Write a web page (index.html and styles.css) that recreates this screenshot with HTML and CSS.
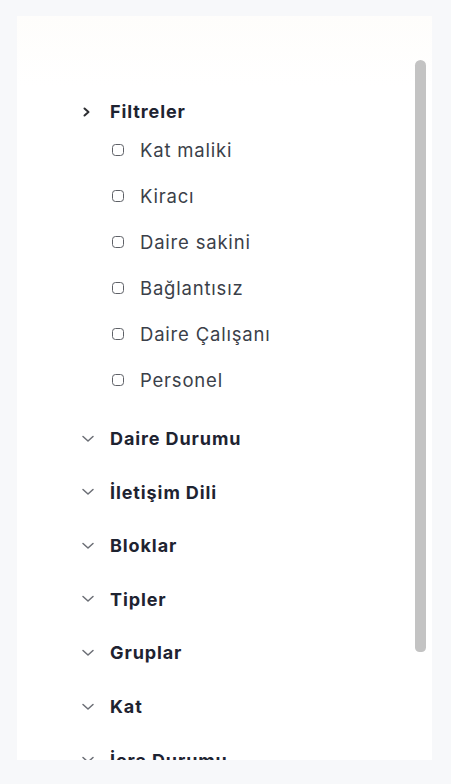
FILE: index.html
```html
<!DOCTYPE html>
<html lang="tr">
<head>
<meta charset="utf-8">
<link rel="stylesheet" href="styles.css">
</head>
<body>
<div class="panel">
  <div class="scroller">
    <div class="list">
      <section class="group open">
        <div class="head">
          <svg class="chev" viewBox="0 0 18 16"><path d="M5.5 4.5 L9.5 8 L5.5 11.5"/></svg>
          <span>Filtreler</span>
        </div>
        <ul class="items">
          <li><span class="box"></span><span>Kat maliki</span></li>
          <li><span class="box"></span><span>Kiracı</span></li>
          <li><span class="box"></span><span>Daire sakini</span></li>
          <li><span class="box"></span><span>Bağlantısız</span></li>
          <li><span class="box"></span><span>Daire Çalışanı</span></li>
          <li><span class="box"></span><span>Personel</span></li>
        </ul>
      </section>
      <section class="group"><div class="head"><svg class="chev down" viewBox="0 0 18 16"><path d="M4 5.5 L9 10 L14 5.5"/></svg><span>Daire Durumu</span></div></section>
      <section class="group"><div class="head"><svg class="chev down" viewBox="0 0 18 16"><path d="M4 5.5 L9 10 L14 5.5"/></svg><span>İletişim Dili</span></div></section>
      <section class="group"><div class="head"><svg class="chev down" viewBox="0 0 18 16"><path d="M4 5.5 L9 10 L14 5.5"/></svg><span>Bloklar</span></div></section>
      <section class="group"><div class="head"><svg class="chev down" viewBox="0 0 18 16"><path d="M4 5.5 L9 10 L14 5.5"/></svg><span>Tipler</span></div></section>
      <section class="group"><div class="head"><svg class="chev down" viewBox="0 0 18 16"><path d="M4 5.5 L9 10 L14 5.5"/></svg><span>Gruplar</span></div></section>
      <section class="group"><div class="head"><svg class="chev down" viewBox="0 0 18 16"><path d="M4 5.5 L9 10 L14 5.5"/></svg><span>Kat</span></div></section>
      <section class="group"><div class="head"><svg class="chev down" viewBox="0 0 18 16"><path d="M4 5.5 L9 10 L14 5.5"/></svg><span>İcra Durumu</span></div></section>
      <section class="group"><div class="head"><svg class="chev down" viewBox="0 0 18 16"><path d="M4 5.5 L9 10 L14 5.5"/></svg><span>Borç Durumu</span></div></section>
      <section class="group"><div class="head"><svg class="chev down" viewBox="0 0 18 16"><path d="M4 5.5 L9 10 L14 5.5"/></svg><span>Araç Durumu</span></div></section>
    </div>
  </div>
  <div class="thumb"></div>
</div>
</body>
</html>
```

FILE: styles.css
```css
html, body {
  margin: 0;
  padding: 0;
  background: #f7f8fa;
  font-family: Inter, "Noto Sans", sans-serif;
}

body {
  padding: 16px 19px 24px 17px;
}

.panel {
  position: relative;
  width: 415px;
  background: linear-gradient(180deg, #fefdfb 0px, #ffffff 70px);
  padding-top: 44px;
}

.scroller {
  height: 700px;
  overflow: hidden;
  margin-right: 17px;
}

.thumb {
  position: absolute;
  left: 398px;
  top: 44px;
  width: 11px;
  height: 592px;
  background: #c3c3c3;
  border-radius: 6px 6px 5px 5px;
}

.list {
  padding: 25px 0 6px 62px;
}

.group {
  padding: 14.8px 0;
}

.group.open {
  padding-bottom: 9px;
}

.head {
  display: flex;
  align-items: center;
  height: 24px;
  gap: 13px;
  font-size: 18px;
  font-weight: 650;
  letter-spacing: 0.9px;
  color: #1e2331;
}

.chev {
  width: 18px;
  height: 16px;
  flex: none;
  fill: none;
  stroke: #2e2f33;
  stroke-width: 2;
  stroke-linecap: round;
  stroke-linejoin: round;
}

.chev.down {
  stroke: #6b6e75;
  stroke-width: 1.5;
}

.items {
  list-style: none;
  margin: 3px 0 0;
  padding: 0 0 0 33px;
}

.items li {
  display: flex;
  align-items: center;
  gap: 16px;
  height: 46px;
  font-size: 18.5px;
  letter-spacing: 0.8px;
  color: #3b3f49;
}

.box {
  width: 10px;
  height: 10px;
  border: 1.7px solid #5e6167;
  border-radius: 3.5px;
  flex: none;
}
```
